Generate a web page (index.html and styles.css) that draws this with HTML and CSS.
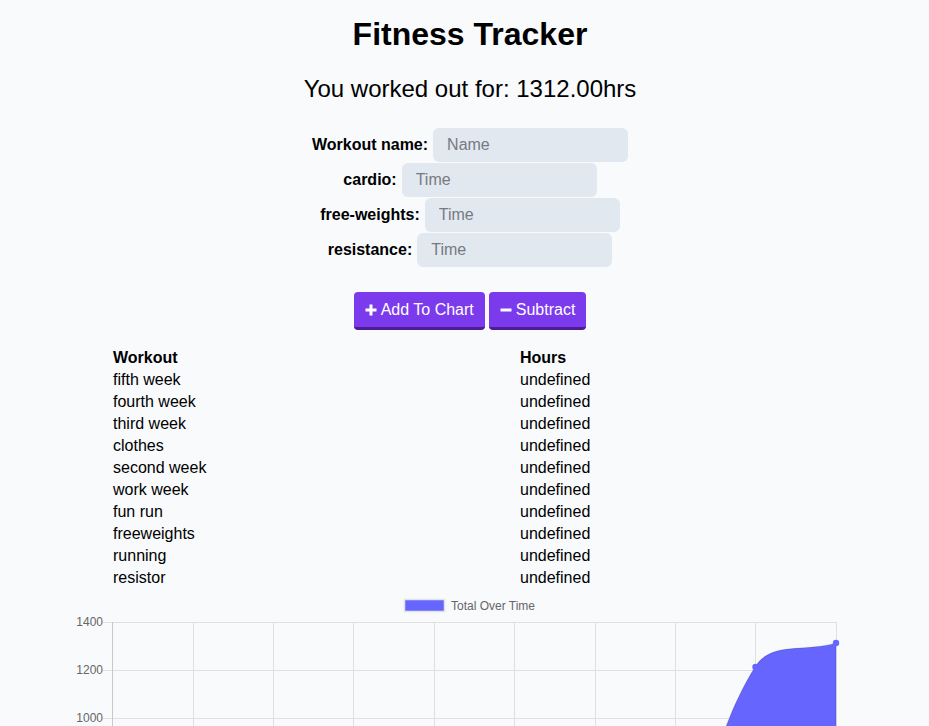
FILE: index.html
```html
<!DOCTYPE html>
<html lang="en">
<head>
<meta charset="utf-8">
<title>Fitness Tracker</title>
<link rel="stylesheet" href="styles.css">
</head>
<body>
<div class="top">
  <h1 class="title">Fitness Tracker</h1>
  <h2 class="total">You worked out for: 1312.00hrs</h2>
  <form class="form">
    <div class="row"><label class="lbl">Workout name:</label><input class="field" placeholder="Name"></div>
    <div class="row"><label class="lbl">cardio:</label><input class="field" placeholder="Time"></div>
    <div class="row"><label class="lbl">free-weights:</label><input class="field" placeholder="Time"></div>
    <div class="row"><label class="lbl">resistance:</label><input class="field" placeholder="Time"></div>
  </form>
  <div class="actions">
    <button class="btn btn-add" type="button"><svg class="ico" viewBox="0 0 12 12" width="12" height="12"><path d="M4.5 0.5h3v4h4v3h-4v4h-3v-4h-4v-3h4z" fill="#fff"/></svg>Add To Chart</button>
    <button class="btn btn-sub" type="button"><svg class="ico" viewBox="0 0 12 12" width="12" height="12"><path d="M0.5 4.5h11v3h-11z" fill="#fff"/></svg>Subtract</button>
  </div>
</div>
<div class="table">
  <div class="th">Workout</div><div class="th">Hours</div>
  <div class="td">fifth week</div><div class="td">undefined</div>
  <div class="td">fourth week</div><div class="td">undefined</div>
  <div class="td">third week</div><div class="td">undefined</div>
  <div class="td">clothes</div><div class="td">undefined</div>
  <div class="td">second week</div><div class="td">undefined</div>
  <div class="td">work week</div><div class="td">undefined</div>
  <div class="td">fun run</div><div class="td">undefined</div>
  <div class="td">freeweights</div><div class="td">undefined</div>
  <div class="td">running</div><div class="td">undefined</div>
  <div class="td">resistor</div><div class="td">undefined</div>
</div>
<svg class="chart" viewBox="0 589 929 137" width="929" height="137">
  <rect x="404.5" y="599.5" width="40" height="12" fill="#6666ff" stroke="#e4e4e8" stroke-width="1.5"/>
  <text x="451" y="610" class="legend">Total Over Time</text>
  <g stroke="#dfe0e3" stroke-width="1">
    <line x1="103" y1="622.5" x2="836.5" y2="622.5"/>
    <line x1="103" y1="670.5" x2="836.5" y2="670.5"/>
    <line x1="103" y1="718.5" x2="836.5" y2="718.5"/>
    <line x1="193.5" y1="622" x2="193.5" y2="726"/>
    <line x1="273.5" y1="622" x2="273.5" y2="726"/>
    <line x1="353.5" y1="622" x2="353.5" y2="726"/>
    <line x1="434.5" y1="622" x2="434.5" y2="726"/>
    <line x1="514.5" y1="622" x2="514.5" y2="726"/>
    <line x1="595.5" y1="622" x2="595.5" y2="726"/>
    <line x1="675.5" y1="622" x2="675.5" y2="726"/>
    <line x1="755.5" y1="622" x2="755.5" y2="726"/>
    <line x1="836.5" y1="622" x2="836.5" y2="726"/>
  </g>
  <line x1="112.5" y1="622" x2="112.5" y2="726" stroke="#c8c9cc" stroke-width="1"/>
  <text x="103" y="626" class="tick">1400</text>
  <text x="103" y="674" class="tick">1200</text>
  <text x="103" y="722" class="tick">1000</text>
  <path d="M675 900 C700 840 707 743.6 755 667 C771.4 640.8 803.6 652.6 836 643 L836 900 Z" fill="#6666ff" stroke="rgba(0,0,0,0.12)" stroke-width="1.2"/>
  <circle cx="755.5" cy="667" r="3.2" fill="#6666ff"/>
  <circle cx="836" cy="643" r="3.2" fill="#6666ff"/>
</svg>
</body>
</html>
```
FILE: styles.css
```css
html, body {
  margin: 0;
  padding: 0;
  background: #f8fafc;
}
body {
  font-family: "Liberation Sans", Arial, sans-serif;
  color: #000;
  width: 929px;
  height: 726px;
  overflow: hidden;
}
.top {
  margin-left: 11px;
  display: flex;
  flex-direction: column;
  align-items: center;
}
.title {
  margin: 16px 0 0;
  font-size: 32px;
  line-height: 37px;
  font-weight: bold;
}
.total {
  margin: 22px 0 0;
  font-size: 24px;
  line-height: 28px;
  font-weight: normal;
}
.form {
  margin-top: 25px;
  display: flex;
  flex-direction: column;
  align-items: center;
}
.row {
  height: 35px;
  display: flex;
  align-items: flex-start;
  gap: 5px;
}
.lbl {
  font-weight: bold;
  font-size: 16px;
  line-height: 34px;
}
.field {
  box-sizing: border-box;
  width: 195px;
  height: 34px;
  border: none;
  border-radius: 6px;
  background: #e2e8f0;
  padding: 0 14px;
  font-family: "Liberation Sans", Arial, sans-serif;
  font-size: 16px;
  color: #000;
  outline: none;
}
.field::placeholder {
  color: #767a80;
}
.actions {
  margin-top: 24px;
  display: flex;
  gap: 4px;
}
.btn {
  display: flex;
  align-items: center;
  gap: 4px;
  height: 38px;
  box-sizing: border-box;
  padding: 1px 11px 0 11px;
  border: none;
  border-bottom: 3px solid #4c1d95;
  border-radius: 4px;
  background: #7c3aed;
  color: #fff;
  font-family: "Liberation Sans", Arial, sans-serif;
  font-size: 16px;
}
.ico {
  display: block;
}
.table {
  margin-top: 17px;
  padding-left: 113px;
  display: grid;
  grid-template-columns: 407px 200px;
}
.th, .td {
  height: 22px;
  line-height: 22px;
  font-size: 16px;
}
.th {
  font-weight: bold;
}
.chart {
  display: block;
}
.legend {
  font-family: "Liberation Sans", Arial, sans-serif;
  font-size: 12px;
  fill: #666;
}
.tick {
  font-family: "Liberation Sans", Arial, sans-serif;
  font-size: 12px;
  fill: #666;
  text-anchor: end;
}
```
